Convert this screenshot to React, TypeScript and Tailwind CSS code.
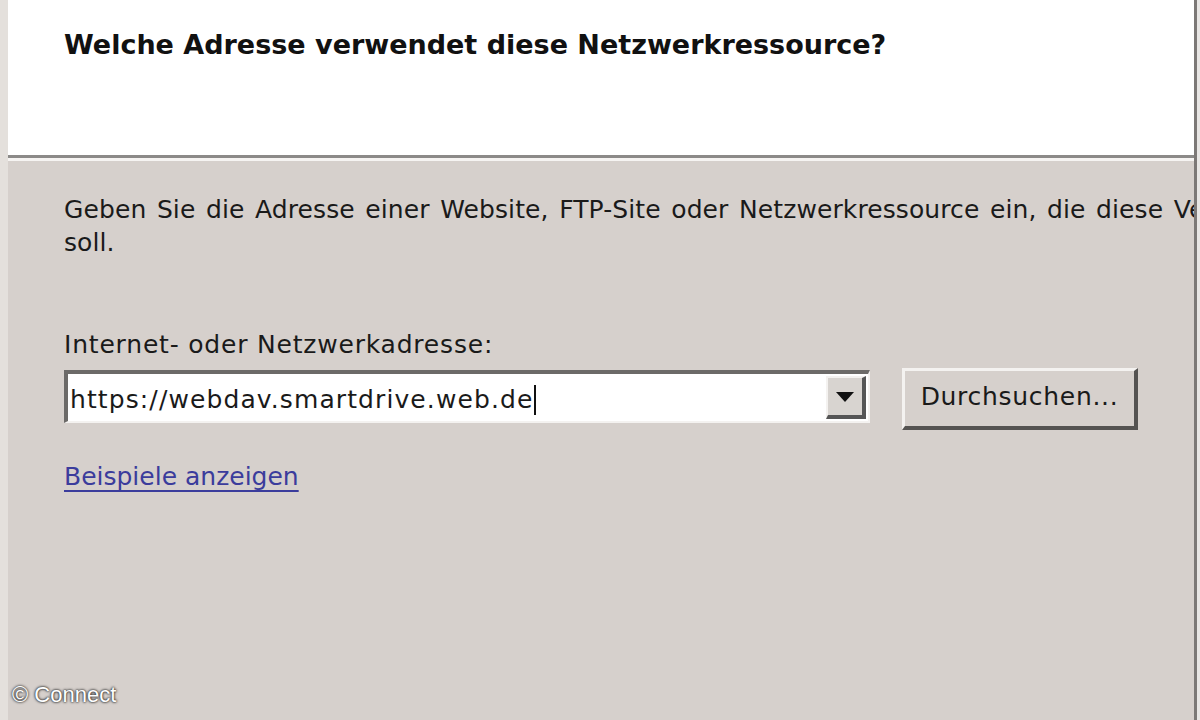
export default function App() {
  return (
    <div className="relative flex h-[720px] w-[1200px] overflow-hidden bg-[#d6d0cc] font-['DejaVu_Sans',sans-serif] text-[#1a1a1a]">
      <div className="w-[8px] shrink-0 bg-[#e4e0dc]" />
      <div className="flex min-w-0 flex-1 flex-col">
        <header className="h-[155px] shrink-0 bg-white pl-[56px] pt-[25px]">
          <h1 className="whitespace-nowrap text-[27px] leading-[40px] font-bold text-[#111]">
            Welche Adresse verwendet diese Netzwerkressource?
          </h1>
        </header>
        <div className="h-[3px] shrink-0 bg-[#8c8a88]" />
        <div className="h-[3px] shrink-0 bg-[#f6f4f2]" />

        <main className="flex flex-col pl-[56px] pt-[32px] text-[25px]">
          <p className="whitespace-nowrap leading-[33px] tracking-[0.1px] [word-spacing:2.5px]">
            Geben Sie die Adresse einer Website, FTP-Site oder Netzwerkressource ein, die diese Verknüpfung öffnen
            <br />
            soll.
          </p>

          <p className="mt-[71px] whitespace-nowrap leading-[30px] tracking-[0.8px]">Internet- oder Netzwerkadresse:</p>

          <div className="mt-[8px] flex items-start">
            <div className="mt-[2px] flex h-[53px] w-[806px] border-t-[4px] border-l-[4px] border-b-[2px] border-r-[2px] border-t-[#6c6a68] border-l-[#6c6a68] border-b-[#f4f2f0] border-r-[#f4f2f0] bg-white">
              <div className="flex flex-1 items-center pl-[2px] pt-[4px]">
                <span className="whitespace-nowrap tracking-[1.1px]">https://webdav.smartdrive.web.de</span>
                <span className="ml-[1px] h-[30px] w-[2px] bg-[#111]" />
              </div>
              <div className="my-[2px] mr-[2px] flex w-[40px] items-center justify-center border-t-[2px] border-l-[2px] border-b-[4px] border-r-[4px] border-t-[#f4f2f0] border-l-[#f4f2f0] border-b-[#555] border-r-[#555] bg-[#d8d4d0]">
                <svg width="18" height="10" viewBox="0 0 18 10">
                  <path d="M0 0 H18 L9 10 Z" fill="#111" />
                </svg>
              </div>
            </div>
            <button className="ml-[32px] flex h-[62px] w-[236px] items-center justify-center border-t-[3px] border-l-[3px] border-b-[4px] border-r-[4px] border-t-[#f4f2f0] border-l-[#f4f2f0] border-b-[#555351] border-r-[#555351] bg-[#d6d0cc] pb-[4px] text-[25px] tracking-[0.7px] text-[#1a1a1a]">
              Durchsuchen...
            </button>
          </div>

          <a className="mt-[31px] w-fit whitespace-nowrap text-[25px] leading-[32px] text-[#3b3c9c] underline decoration-[2px] underline-offset-[5px]">
            Beispiele anzeigen
          </a>
        </main>
      </div>
      <div className="w-[3px] shrink-0 bg-[#7c7876]" />
      <div className="w-[3px] shrink-0 bg-[#e8e6e4]" />

      <span className="absolute bottom-[9px] left-[12px] font-['Liberation_Sans',sans-serif] text-[22px] text-white [text-shadow:0_0_3px_#222,0_0_2px_#222]">
        © Connect
      </span>
    </div>
  );
}
